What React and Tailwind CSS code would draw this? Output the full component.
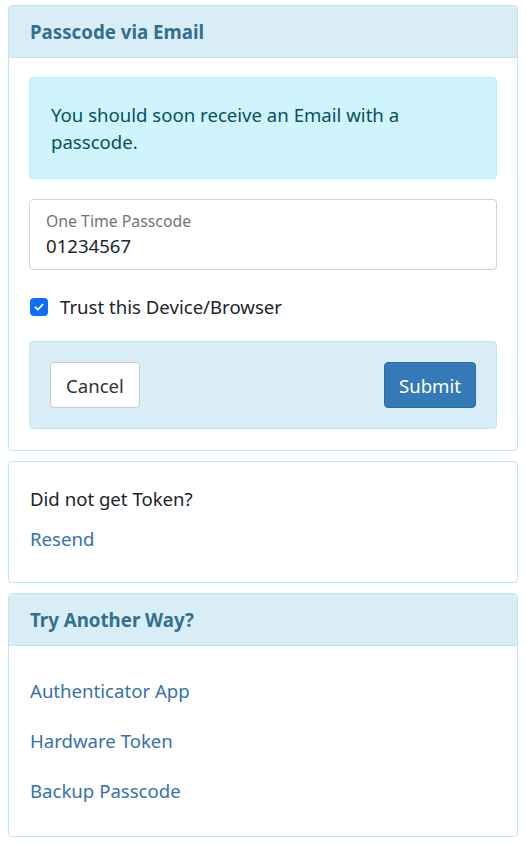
import React from "react";

const font = { fontFamily: '"Noto Sans", "Segoe UI", sans-serif' };

const Card = ({ title, children, className = "" }) => (
  <div className={`border border-[#bce8f1] rounded-[4px] bg-white ${className}`}>
    {title && (
      <div className="h-[52px] px-[21px] flex items-center bg-[#d9edf7] border-b border-[#bce8f1] rounded-t-[3px]">
        <h3 className="text-[18.7px] font-bold text-[#31708f]">{title}</h3>
      </div>
    )}
    {children}
  </div>
);

const App = () => {
  return (
    <div
      className="min-h-screen bg-white px-2 pt-[5px] text-[18.6px] leading-[27px] text-[#212529]"
      style={font}
    >
      {/* Passcode card */}
      <Card title="Passcode via Email">
        <div className="px-5 pt-[19px] pb-[21px]">
          <div className="px-[21px] py-[23px] bg-[#cff4fc] border border-[#b6effb] rounded-[4px] text-[#055160]">
            You should soon receive an Email with a passcode.
          </div>

          <div className="mt-5 h-[71px] border border-[#ced4da] rounded-[4px] px-4 pt-[11px]">
            <div className="text-[15.8px] leading-[21px] text-[#757575]">One Time Passcode</div>
            <div className="leading-[27px]">01234567</div>
          </div>

          <label className="mt-[23px] flex items-center gap-3">
            <span className="w-[18px] h-[18px] ml-px rounded-[4px] bg-[#0d6efd] flex items-center justify-center">
              <svg viewBox="0 0 20 20" className="w-[12px] h-[12px]" fill="none">
                <path d="M4 10.5l4 4 8-8.5" stroke="white" strokeWidth="3" strokeLinecap="round" strokeLinejoin="round" />
              </svg>
            </span>
            <span>Trust this Device/Browser</span>
          </label>

          <div className="mt-[21px] p-5 bg-[#d9edf7] border border-[#bce8f1] rounded-[4px] flex justify-between">
            <button className="h-[46px] px-[15px] bg-white border border-[#ccc] rounded-[4px] text-[#333]">
              Cancel
            </button>
            <button className="h-[46px] px-[14px] bg-[#337ab7] border border-[#2e6da4] rounded-[4px] text-white">
              Submit
            </button>
          </div>
        </div>
      </Card>

      {/* Resend card */}
      <Card className="mt-[10px]">
        <div className="px-[21px] pt-[23px] pb-[30px]">
          <p>Did not get Token?</p>
          <a className="mt-[13px] block text-[#3572b0]">Resend</a>
        </div>
      </Card>

      {/* Other methods */}
      <Card title="Try Another Way?" className="mt-[10px]">
        <div className="px-[21px] pt-[31px] pb-[32px] flex flex-col gap-[23px] text-[#3572b0]">
          <a>Authenticator App</a>
          <a>Hardware Token</a>
          <a>Backup Passcode</a>
        </div>
      </Card>
    </div>
  );
};

export default App;
